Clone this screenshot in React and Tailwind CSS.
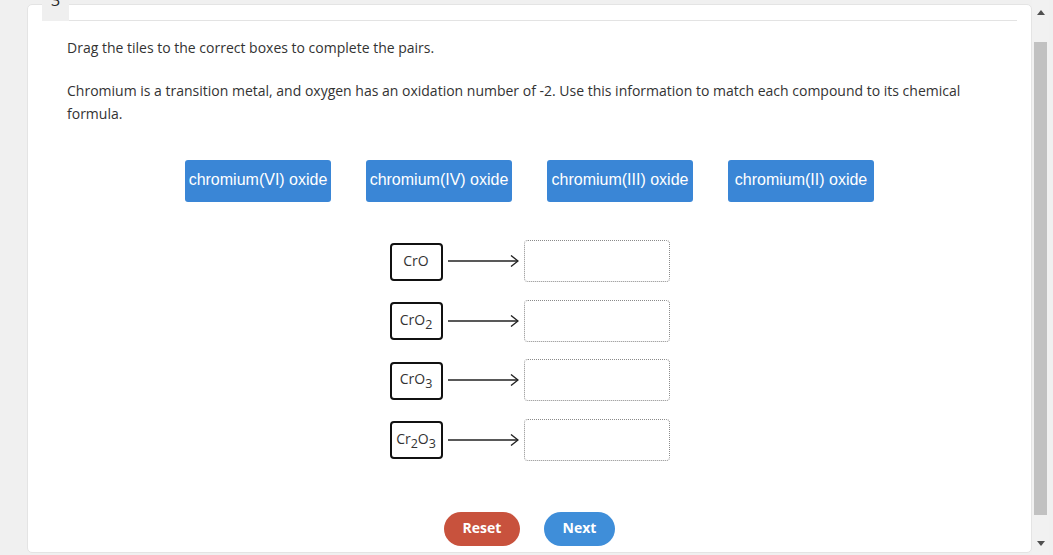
import React from "react"

const tiles = ["chromium(VI) oxide", "chromium(IV) oxide", "chromium(III) oxide", "chromium(II) oxide"]

function Formula({ parts }) {
    return (
        <span className="leading-none">
            {parts.map((p, idx) =>
                p.sub ? <span key={idx} className="text-[12.5px] relative top-[4px]">{p.t}</span> : <span key={idx}>{p.t}</span>
            )}
        </span>
    )
}

const rows = [
    [{ t: "CrO" }],
    [{ t: "CrO" }, { t: "2", sub: true }],
    [{ t: "CrO" }, { t: "3", sub: true }],
    [{ t: "Cr" }, { t: "2", sub: true }, { t: "O" }, { t: "3", sub: true }],
]

function Arrow() {
    return (
        <svg width="71" height="12" viewBox="0 0 71 12" className="shrink-0">
            <line x1="0" y1="6" x2="70" y2="6" stroke="#222" strokeWidth="1.3" />
            <polyline points="63,0.5 70,6 63,11.5" fill="none" stroke="#222" strokeWidth="1.4" />
        </svg>
    )
}

function MatchRow({ parts }) {
    return (
        <div className="flex items-center h-[42px]">
            <div className="w-[53px] h-[38px] mt-[1px] border-2 border-[#111] rounded-[4px] flex items-center justify-center text-[14px] text-[#333] pb-[2px]">
                <Formula parts={parts} />
            </div>
            <div className="mx-[5px] flex items-center"><Arrow /></div>
            <div className="w-[146px] h-[42px] border border-dotted border-[#8a8a8a] rounded-[4px]"></div>
        </div>
    )
}

export default function App() {
    return (
        <div className="w-[1053px] h-[555px] flex bg-[#f0f0f0] overflow-hidden" style={{ fontFamily: '"Open Sans", sans-serif' }}>
            <div className="w-[1032px] shrink-0">
                <div className="ml-[27px] mt-[4px] w-[1005px] h-[549px] bg-white rounded-[5px] border border-[#e4e4e4] flex flex-col">
                    <div className="flex items-end ml-[14px] mr-[14px] -mt-[5px]">
                        <div className="w-[27px] h-[21px] bg-[#efefef] overflow-hidden flex justify-center">
                            <span className="text-[16px] leading-none -mt-[8px] text-[#222]">3</span>
                        </div>
                        <div className="flex-1 border-b border-[#e3e3e3]"></div>
                    </div>
                    <div className="px-[39px] pt-[15px] text-[14px] leading-[23px] text-[#333]">
                        <p>Drag the tiles to the correct boxes to complete the pairs.</p>
                        <p className="mt-[20px]">Chromium is a transition metal, and oxygen has an oxidation number of -2. Use this information to match each compound to its chemical formula.</p>
                    </div>
                    <div className="flex justify-center gap-[35px] mt-[35px]">
                        {tiles.map((t) => (
                            <div key={t} className="w-[146px] h-[42px] bg-[#3a86d6] rounded-[3px] flex items-center justify-center text-white text-[16px] pb-[3px]" style={{ fontFamily: '"Liberation Sans", Arial, sans-serif' }}>
                                {t}
                            </div>
                        ))}
                    </div>
                    <div className="flex flex-col items-center gap-[17.5px] mt-[38px]">
                        {rows.map((r, idx) => <MatchRow key={idx} parts={r} />)}
                    </div>
                    <div className="flex justify-center gap-[24px] mt-[51px]">
                        <button className="w-[76px] h-[34px] rounded-full bg-[#c8523d] text-white font-bold text-[14px] pb-[2px]">Reset</button>
                        <button className="w-[71px] h-[34px] rounded-full bg-[#3f8ed9] text-white font-bold text-[14px] pb-[2px]">Next</button>
                    </div>
                </div>
            </div>
            <div className="w-[17px] h-full bg-[#f1f1f1] flex flex-col items-center">
                <div className="h-[24px] flex items-center justify-center">
                    <svg width="8" height="5" viewBox="0 0 8 5"><polygon points="0,5 8,5 4,0" fill="#505050" /></svg>
                </div>
                <div className="w-[13px] mt-[18px] h-[473px] bg-[#c1c1c1]"></div>
                <div className="flex-1"></div>
                <div className="h-[24px] flex items-center justify-center">
                    <svg width="8" height="5" viewBox="0 0 8 5"><polygon points="0,0 8,0 4,5" fill="#505050" /></svg>
                </div>
            </div>
        </div>
    )
}
